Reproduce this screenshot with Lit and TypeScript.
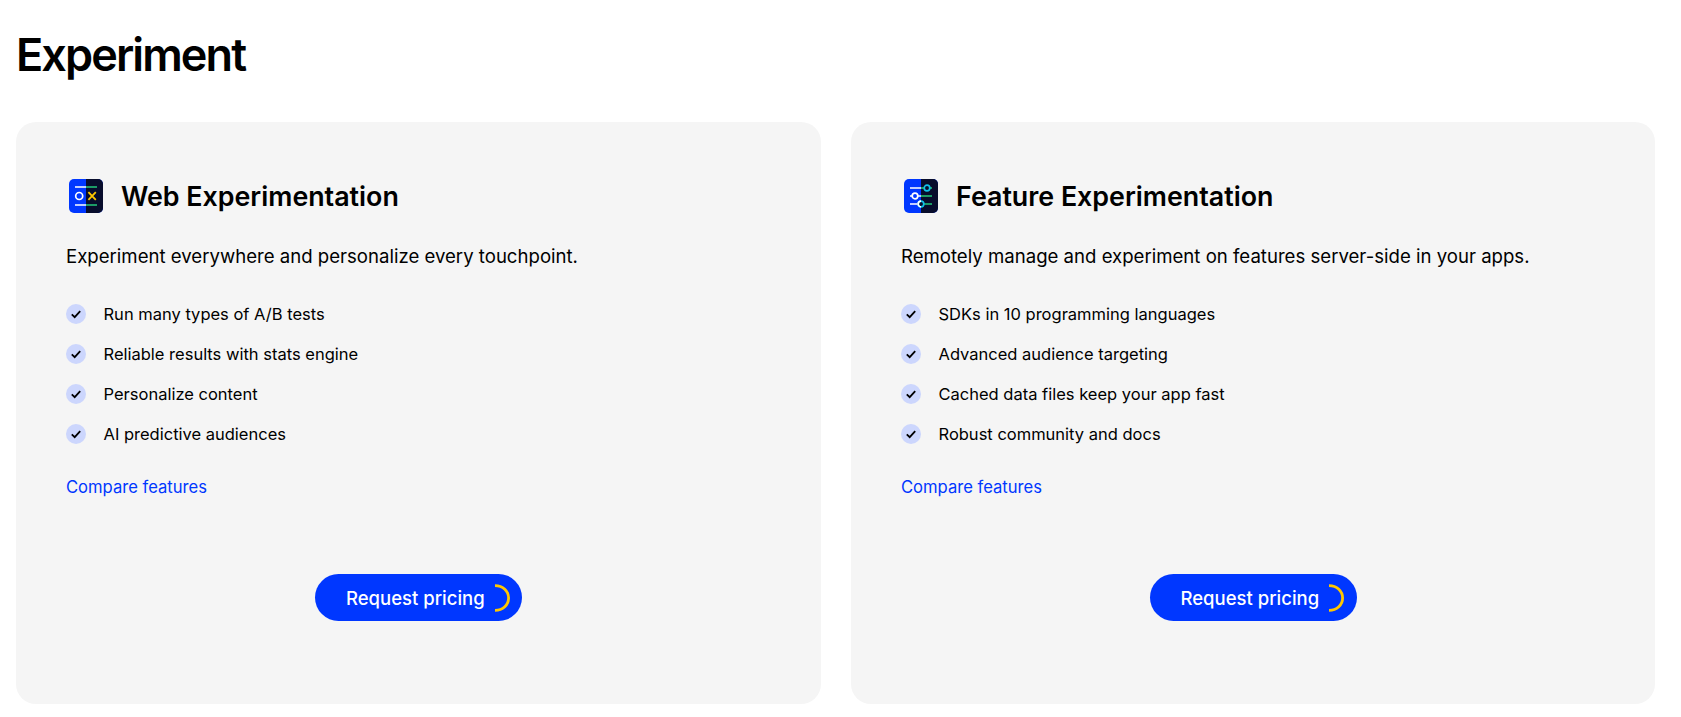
import { LitElement, html, css, svg } from "lit";
import { customElement } from "lit/decorators.js";

const iconBase = svg`<rect width="34" height="34" rx="5" fill="#0037ff"/><path d="M17 0h12a5 5 0 0 1 5 5v24a5 5 0 0 1-5 5H17z" fill="#080d2c"/>`;

const iconA = html`<svg class="logo" viewBox="0 0 34 34" width="34" height="34" aria-hidden="true">
  ${iconBase}
  <g fill="none" stroke-width="1.4">
    <path d="M6 8h11M6 26h11" stroke="#fff"/>
    <path d="M17 8h11M17 26h11" stroke="#23c97a"/>
    <circle cx="10.2" cy="17" r="3.5" stroke="#fff" stroke-width="1.7"/>
    <path d="M19.4 13.2l7.4 7.6M26.8 13.2l-7.4 7.6" stroke="#ffc700" stroke-width="1.8"/>
  </g>
</svg>`;

const iconB = html`<svg class="logo" viewBox="0 0 34 34" width="34" height="34" aria-hidden="true">
  ${iconBase}
  <g fill="none" stroke-width="1.6">
    <path d="M6 9h11M6 17h11M6 25h11" stroke="#fff"/>
    <path d="M17 9h11M17 17h11M17 25h11" stroke="#23c97a"/>
    <circle cx="23" cy="9" r="2.8" fill="#080d2c" stroke="#12c2e9" stroke-width="1.7"/>
    <circle cx="11" cy="17" r="2.8" fill="#0037ff" stroke="#fff" stroke-width="1.7"/>
    <circle cx="17" cy="25" r="2.8" fill="#080d2c" stroke="#12c2e9" stroke-width="1.7"/>
    <path d="M17 22.2a2.8 2.8 0 0 0 0 5.6" stroke="#fff" stroke-width="1.7"/>
  </g>
</svg>`;

const check = html`<svg class="ck" viewBox="0 0 20 20" width="20" height="20" aria-hidden="true">
  <circle cx="10" cy="10" r="10" fill="#ccd6fd"/>
  <path d="M5.8 10.3l2.9 2.9 5.5-6.1" fill="none" stroke="#000" stroke-width="1.8"/>
</svg>`;

const spinner = html`<svg class="arc" viewBox="0 0 16 28" width="16" height="28" aria-hidden="true">
  <path d="M1 1.6C9 1.6 14.6 7.2 14.6 14S9 26.4 1 26.4" fill="none" stroke="#ffc700" stroke-width="2.8"/>
</svg>`;

type Card = { title: string; desc: string; items: string[]; icon: unknown };

const cards: Card[] = [
  {
    title: "Web Experimentation",
    desc: "Experiment everywhere and personalize every touchpoint.",
    items: ["Run many types of A/B tests", "Reliable results with stats engine", "Personalize content", "AI predictive audiences"],
    icon: iconA,
  },
  {
    title: "Feature Experimentation",
    desc: "Remotely manage and experiment on features server-side in your apps.",
    items: ["SDKs in 10 programming languages", "Advanced audience targeting", "Cached data files keep your app fast", "Robust community and docs"],
    icon: iconB,
  },
];

@customElement("app-root")
export class AppRoot extends LitElement {
  static styles = css`
    :host { display: block; font-family: "Inter", "Liberation Sans", sans-serif; background: #fff; color: #000; height: 717px; overflow: hidden; }
    h1 { margin: 0; padding: 27px 16px 0; font-size: 45px; line-height: 56px; font-weight: 600; letter-spacing: -1.9px; }
    .cards { display: grid; grid-template-columns: 805fr 804fr; gap: 30px; padding: 39px 26px 0 16px; }
    .card { height: 582px; background: #f5f5f5; border-radius: 20px; padding: 57px 50px 0; box-sizing: border-box; display: flex; flex-direction: column; }
    .head { display: flex; align-items: center; gap: 18px; margin-left: 3px; height: 34px; }
    .logo { flex: none; }
    h2 { margin: 0; font-size: 26.8px; line-height: 34px; font-weight: 600; }
    .desc { margin: 31px 0 0; font-size: 18.6px; line-height: 24px; }
    ul { list-style: none; margin: 36px 0 0; padding: 0; display: flex; flex-direction: column; gap: 20px; }
    li { display: flex; align-items: center; gap: 17.5px; font-size: 16.5px; line-height: 20px; height: 20px; }
    .ck { flex: none; }
    a { color: #0037ff; margin-top: 31px; font-size: 16.6px; line-height: 24px; text-decoration: none; }
    .btn { align-self: center; margin-top: 75px; background: #0037ff; color: #fff; border-radius: 24px; height: 47px; width: 207px; box-sizing: border-box; padding-left: 31px; display: flex; align-items: center; gap: 9px; font-size: 18.5px; font-weight: 500; white-space: nowrap; }
    .arc { flex: none; }
  `;
  render() {
    return html`<h1>Experiment</h1>
      <div class="cards">
        ${cards.map(
          (c) => html`<section class="card">
            <div class="head">${c.icon}<h2>${c.title}</h2></div>
            <p class="desc">${c.desc}</p>
            <ul>${c.items.map((i) => html`<li>${check}<span>${i}</span></li>`)}</ul>
            <a href="#">Compare features</a>
            <div class="btn">Request pricing${spinner}</div>
          </section>`
        )}
      </div>`;
  }
}
